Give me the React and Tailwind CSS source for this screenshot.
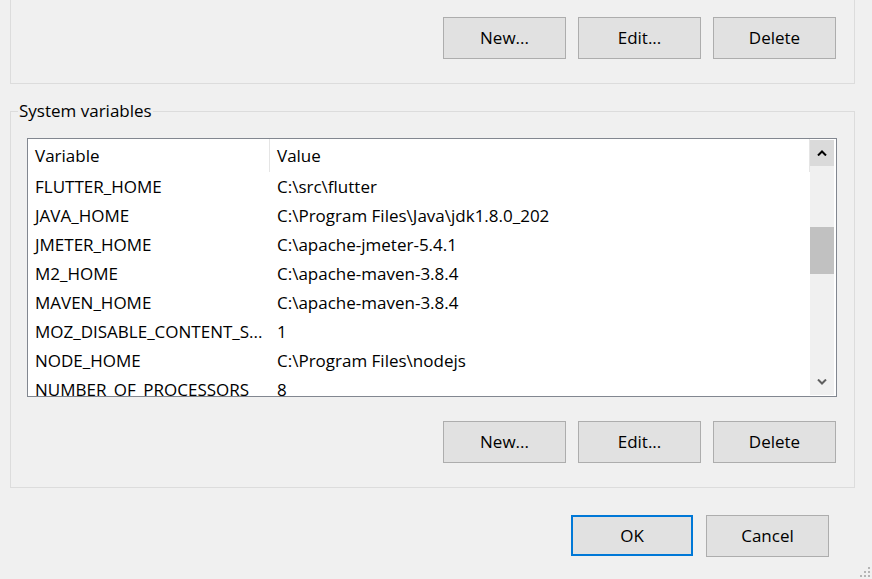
import React from 'react';

const rows = [
  ['FLUTTER_HOME', 'C:\\src\\flutter'],
  ['JAVA_HOME', 'C:\\Program Files\\Java\\jdk1.8.0_202'],
  ['JMETER_HOME', 'C:\\apache-jmeter-5.4.1'],
  ['M2_HOME', 'C:\\apache-maven-3.8.4'],
  ['MAVEN_HOME', 'C:\\apache-maven-3.8.4'],
  ['MOZ_DISABLE_CONTENT_S...', '1'],
  ['NODE_HOME', 'C:\\Program Files\\nodejs'],
  ['NUMBER_OF_PROCESSORS', '8'],
];

const Btn = ({ children, primary }) => (
  <button
    className={
      primary
        ? 'w-[122px] h-[41px] bg-[#e1e1e1] border-2 border-[#0078d7] text-black'
        : 'w-[123px] h-[42px] bg-[#e1e1e1] border border-[#adadad] text-black'
    }
  >
    {children}
  </button>
);

const ButtonRow = ({ className }) => (
  <div className={'flex justify-end gap-[12px] ' + className}>
    <Btn>New...</Btn>
    <Btn>Edit...</Btn>
    <Btn>Delete</Btn>
  </div>
);

export default function App() {
  return (
    <div className="w-[872px] h-[579px] bg-[#f0f0f0] overflow-hidden relative font-['Open_Sans',sans-serif] text-[17px] text-black">
      {/* user variables group (cut off at top) */}
      <div className="ml-[10px] w-[845px] h-[94px] mt-[-10px] border border-[#dcdcdc] pt-[26px]">
        <ButtonRow className="pr-[18px]" />
      </div>

      {/* system variables */}
      <fieldset className="ml-[10px] w-[845px] mt-[16px] border border-[#dcdcdc] px-[16px] pb-[24px]">
        <legend className="ml-[-9px] px-[1px] leading-[22px]">System variables</legend>
        <div className="mt-[16px] mb-[24px] w-[810px] h-[259px] border border-[#828790] bg-white flex">
          <div className="flex-1 overflow-hidden">
            <div className="flex h-[33px] items-center">
              <div className="w-[242px] pl-[7px] border-r border-[#e5e5e5] h-full flex items-center">Variable</div>
              <div className="flex-1 pl-[7px] border-r border-[#e5e5e5] h-full flex items-center">Value</div>
            </div>
            {rows.map(([k, v]) => (
              <div key={k} className="flex h-[29px] items-center whitespace-nowrap">
                <div className="w-[242px] pl-[7px]">{k}</div>
                <div className="flex-1 pl-[7px]">{v}</div>
              </div>
            ))}
          </div>
          <div className="w-[24px] mt-[1px] mb-[1px] mr-[2px] bg-[#f0f0f0] flex flex-col">
            <div className="h-[26px] bg-[#dadada] flex items-center justify-center">
              <svg width="10" height="6" viewBox="0 0 10 6">
                <path d="M1 5.5 L5 1.5 L9 5.5" fill="none" stroke="#000" strokeWidth="2" />
              </svg>
            </div>
            <div className="h-[61px]" />
            <div className="h-[47px] bg-[#c1c1c1]" />
            <div className="flex-1" />
            <div className="h-[26px] flex items-center justify-center">
              <svg width="10" height="6" viewBox="0 0 10 6">
                <path d="M1 0.5 L5 4.5 L9 0.5" fill="none" stroke="#606060" strokeWidth="2" />
              </svg>
            </div>
          </div>
        </div>
        <ButtonRow className="pr-[2px]" />
      </fieldset>

      <div className="flex justify-end gap-[13px] pr-[43px] mt-[27px]">
        <Btn primary>OK</Btn>
        <Btn>Cancel</Btn>
      </div>

      {/* size grip */}
      <svg className="absolute right-[1px] bottom-[1px]" width="11" height="11" viewBox="0 0 11 11">
        <g fill="#b5b5b5">
          <rect x="8" y="0" width="2" height="2" />
          <rect x="4" y="4" width="2" height="2" />
          <rect x="8" y="4" width="2" height="2" />
          <rect x="0" y="8" width="2" height="2" />
          <rect x="4" y="8" width="2" height="2" />
          <rect x="8" y="8" width="2" height="2" />
        </g>
      </svg>
    </div>
  );
}
